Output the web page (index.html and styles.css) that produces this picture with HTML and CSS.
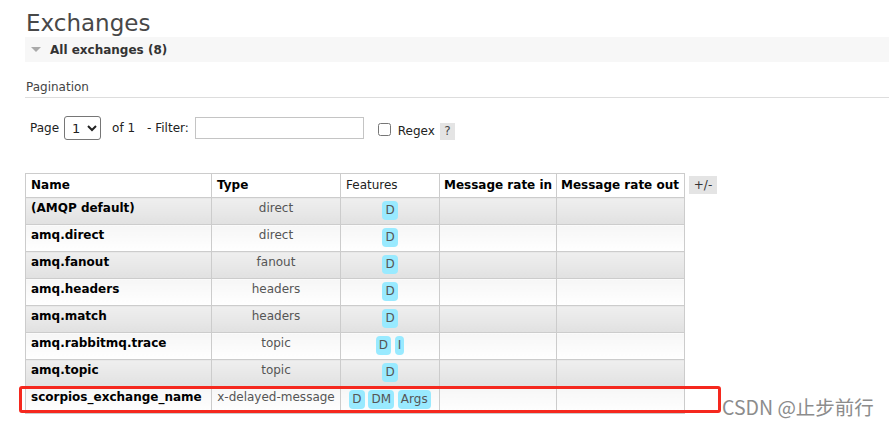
FILE: index.html
```html
<!DOCTYPE html>
<html>
<head>
<meta charset="utf-8">
<title>Exchanges</title>
<link rel="stylesheet" href="styles.css">
</head>
<body>
<div class="page">
  <h1 class="title">Exchanges</h1>
  <div class="section-bar"><span class="tri"></span><span class="section-label">All exchanges (8)</span></div>
  <h3 class="sub">Pagination</h3>
  <div class="pager">
    <span class="p-page">Page</span>
    <select class="p-select"><option>1</option></select>
    <span class="p-of">of 1</span>
    <span class="p-filter">- Filter:</span>
    <input class="p-input" type="text">
    <span class="p-regex"><input class="p-check" type="checkbox"><span class="p-regex-label">Regex</span><span class="help">?</span></span>
  </div>
  <div class="table-row">
    <div class="table-wrap">
      <table class="list">
        <thead>
          <tr>
            <th class="c-name">Name</th>
            <th class="c-type">Type</th>
            <th class="c-feat">Features</th>
            <th class="c-in">Message rate in</th>
            <th class="c-out">Message rate out</th>
          </tr>
        </thead>
        <tbody>
          <tr class="alt1"><td class="name">(AMQP default)</td><td class="type">direct</td><td class="feat"><span class="badge">D</span></td><td></td><td></td></tr>
          <tr class="alt2"><td class="name">amq.direct</td><td class="type">direct</td><td class="feat"><span class="badge">D</span></td><td></td><td></td></tr>
          <tr class="alt1"><td class="name">amq.fanout</td><td class="type">fanout</td><td class="feat"><span class="badge">D</span></td><td></td><td></td></tr>
          <tr class="alt2"><td class="name">amq.headers</td><td class="type">headers</td><td class="feat"><span class="badge">D</span></td><td></td><td></td></tr>
          <tr class="alt1"><td class="name">amq.match</td><td class="type">headers</td><td class="feat"><span class="badge">D</span></td><td></td><td></td></tr>
          <tr class="alt2"><td class="name">amq.rabbitmq.trace</td><td class="type">topic</td><td class="feat"><span class="badge">D</span> <span class="badge">I</span></td><td></td><td></td></tr>
          <tr class="alt1"><td class="name">amq.topic</td><td class="type">topic</td><td class="feat"><span class="badge">D</span></td><td></td><td></td></tr>
          <tr class="alt2"><td class="name">scorpios_exchange_name</td><td class="type">x-delayed-message</td><td class="feat"><span class="badge">D</span> <span class="badge">DM</span> <span class="badge">Args</span></td><td></td><td></td></tr>
        </tbody>
      </table>
      <div class="highlight"></div>
    </div>
    <span class="toggle">+/-</span>
  </div>
  <div class="watermark">CSDN @止步前行</div>
</div>
</body>
</html>
```
FILE: styles.css
```css
html, body {
  margin: 0;
  padding: 0;
  background: #fff;
}
body {
  font-family: "DejaVu Sans", Verdana, sans-serif;
  font-size: 12px;
  color: #222;
}
.page {
  position: relative;
  padding-left: 25px;
  height: 428px;
  box-sizing: border-box;
  overflow: hidden;
}
.title {
  margin: 0;
  padding-top: 12px;
  font-size: 23px;
  line-height: 23px;
  font-weight: normal;
  color: #484848;
  padding-left: 1px;
}
.section-bar {
  margin-top: 2px;
  height: 25px;
  background: #f7f7f7;
  display: flex;
  align-items: center;
}
.tri {
  width: 0;
  height: 0;
  margin-left: 6px;
  margin-right: 9px;
  border-left: 5px solid transparent;
  border-right: 5px solid transparent;
  border-top: 5px solid #aaa;
}
.section-label {
  font-weight: bold;
  color: #333;
  font-size: 12px;
}
.sub {
  margin: 18px 0 0 0;
  font-size: 12px;
  line-height: 15px;
  font-weight: normal;
  color: #444;
  padding: 0 0 2px 1px;
  border-bottom: 1px solid #ddd;
}
.pager {
  margin-top: 18px;
  height: 24px;
  display: flex;
  align-items: center;
  color: #222;
}
.p-page {
  margin-left: 5px;
}
.p-select {
  margin: 0 0 0 5px;
  width: 37px;
  height: 24px;
  font-family: "DejaVu Sans", Verdana, sans-serif;
  font-size: 13px;
  color: #222;
  border: 1px solid #767676;
  border-radius: 3px;
  background: #fff;
  padding: 0 0 0 3px;
}
.p-of {
  margin-left: 11px;
}
.p-filter {
  margin-left: 12px;
}
.p-input {
  margin: 0 0 0 6px;
  width: 169px;
  height: 22px;
  box-sizing: border-box;
  border: 1px solid #c4c4c4;
  padding: 0 3px;
}
.p-regex {
  display: flex;
  align-items: center;
  margin-top: 6px;
  margin-left: 14px;
}
.p-check {
  margin: -3px 0 0 0;
  width: 13px;
  height: 13px;
}
.p-regex-label {
  margin-left: 7px;
}
.help {
  margin-left: 5px;
  width: 15px;
  height: 17px;
  line-height: 17px;
  text-align: center;
  background: #e4e4e4;
  color: #444;
}
.table-row {
  margin-top: 33px;
  display: flex;
  align-items: flex-start;
}
.table-wrap {
  position: relative;
}
.list {
  border-collapse: collapse;
  table-layout: fixed;
  width: 660px;
}
.list th, .list td {
  border: 1px solid #ccc;
  line-height: 15px;
  vertical-align: top;
  text-align: left;
  white-space: nowrap;
  overflow: hidden;
}
.list th {
  padding: 4px 5px 4px 5px;
  background: #fff;
  color: #000;
  font-weight: bold;
}
.list th.c-in, .list th.c-out {
  padding-left: 4px;
  padding-right: 0;
}
.list th.c-feat {
  font-weight: normal;
  color: #222;
}
.c-name { width: 175px; }
.c-type { width: 118px; }
.c-feat { width: 88px; }
.c-in { width: 112px; }
.c-out { width: 123px; }
.list td {
  padding: 3px 5px 4px 5px;
}
.list tr.alt1 td {
  background: linear-gradient(#efefef, #e1e1e1);
}
.list tr.alt2 td {
  background: linear-gradient(#f6f6f6, #ffffff);
}
.list td.name {
  font-weight: bold;
  color: #000;
}
.list td.type {
  text-align: center;
  color: #555;
}
.list td.feat {
  text-align: center;
  padding-left: 2px;
  padding-right: 2px;
}
.badge {
  display: inline-block;
  vertical-align: top;
  height: 19px;
  line-height: 19px;
  padding: 0 3px;
  border-radius: 4px;
  background: #99eaff;
  color: #555;
  font-size: 12px;
}
.toggle {
  margin-top: 3px;
  margin-left: 4px;
  width: 28px;
  height: 18px;
  line-height: 18px;
  text-align: center;
  background: #e4e4e4;
  color: #333;
  font-size: 12px;
}
.highlight {
  position: absolute;
  left: -6px;
  top: 213px;
  width: 702px;
  height: 27px;
  box-sizing: border-box;
  border: 3px solid #f5281e;
  border-radius: 3px;
  pointer-events: none;
}
.watermark {
  position: absolute;
  left: 722px;
  top: 394px;
  font-family: "Noto Sans CJK SC", "DejaVu Sans", sans-serif;
  font-size: 19.5px;
  line-height: 26px;
  color: #8c8c8c;
  white-space: nowrap;
}
```
